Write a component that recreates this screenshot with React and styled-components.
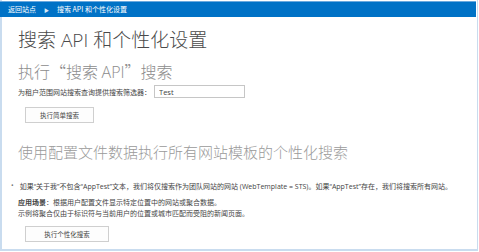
import styled, { createGlobalStyle } from "styled-components";

const GlobalStyle = createGlobalStyle`
  html, body {
    margin: 0;
    padding: 0;
    background: #ffffff;
  }
  body {
    font-family: "Noto Sans CJK SC", "Open Sans", sans-serif;
    color: #444444;
  }
`;

const Frame = styled.div`
  box-sizing: border-box;
  width: 478px;
  height: 251px;
  border: 1px solid #c9dcef;
  border-left-width: 2px;
  border-bottom-width: 2px;
  border-top: none;
  display: flex;
  flex-direction: column;
`;

const TopBar = styled.div`
  display: flex;
  align-items: center;
  gap: 8px;
  height: 15px;
  margin: 1px 1px 0 -2px;
  padding-left: 8px;
  background: #0072c6;
  border-top: 1px solid #6aa9de;
  color: #ffffff;
  font-size: 7px;
  line-height: 1;
`;

const Crumb = styled.span`
  white-space: nowrap;
`;

const Separator = styled.span`
  font-size: 5px;
  opacity: 0.85;
`;

const Content = styled.div`
  display: flex;
  flex-direction: column;
  align-items: flex-start;
  padding-left: 16px;
`;

const PageTitle = styled.h1`
  margin: 11px 0 0;
  font-family: "Open Sans", "Noto Sans CJK SC", sans-serif;
  font-size: 19px;
  font-weight: 300;
  line-height: 24px;
  color: #4a4a4a;
  white-space: nowrap;
`;

const SectionTitle = styled.h2`
  margin: ${({ $top }) => $top}px 0 0;
  font-size: ${({ $size }) => $size}px;
  font-weight: 300;
  line-height: 20px;
  color: ${({ $color }) => $color};
  white-space: nowrap;
`;

const Latin = styled.span`
  font-family: "Open Sans", sans-serif;
`;

const FieldRow = styled.div`
  display: flex;
  align-items: center;
  gap: 3px;
  margin-top: 3px;
  font-size: 7px;
`;

const TextInput = styled.input`
  box-sizing: border-box;
  width: 91px;
  height: 13px;
  padding: 0 4px;
  border: 1px solid #c6c6c6;
  font-family: "Open Sans", sans-serif;
  font-size: 7.5px;
  color: #444444;
  outline: none;
`;

const ActionButton = styled.button`
  box-sizing: border-box;
  width: ${({ $width }) => $width}px;
  height: 16px;
  margin: ${({ $top }) => $top}px 0 0 7px;
  padding: 0;
  border: 1px solid #cfcfcf;
  background: #fdfdfd;
  font-family: "Noto Sans CJK SC", sans-serif;
  font-size: 6.5px;
  color: #444444;
`;

const BulletList = styled.ul`
  margin: 19px 0 0 -7px;
  padding: 0;
  list-style: none;
  font-family: "Open Sans", "Noto Sans CJK SC", sans-serif;
  font-size: 7px;
  white-space: nowrap;
`;

const BulletItem = styled.li`
  display: flex;
  gap: 6px;
  &::before {
    content: "•";
    color: #777777;
  }
`;

const Note = styled.p`
  margin: 6px 0 0;
  font-size: 7px;
  line-height: 11px;
`;

const Strong = styled.b`
  font-weight: 700;
`;

export default function App() {
  return (
    <>
      <GlobalStyle />
      <Frame>
        <TopBar>
          <Crumb>返回站点</Crumb>
          <Separator>▶</Separator>
          <Crumb>搜索 API 和个性化设置</Crumb>
        </TopBar>
        <Content>
          <PageTitle>搜索 API 和个性化设置</PageTitle>
          <SectionTitle $top={9} $size={16} $color="#8c8c8c">
            执行“搜索 <Latin>API</Latin>”搜索
          </SectionTitle>
          <FieldRow>
            <span>为租户范围网站搜索查询提供搜索筛选器：</span>
            <TextInput defaultValue="Test" />
          </FieldRow>
          <ActionButton $top={9} $width={69}>执行简单搜索</ActionButton>
          <SectionTitle $top={19} $size={15} $color="#9a9a9a">
            使用配置文件数据执行所有网站模板的个性化搜索
          </SectionTitle>
          <BulletList>
            <BulletItem>
              如果“关于我”不包含“AppTest”文本，我们将仅搜索作为团队网站的网站 (WebTemplate = STS)。如果“AppTest”存在，我们将搜索所有网站。
            </BulletItem>
          </BulletList>
          <Note>
            <Strong>应用场景</Strong>：根据用户配置文件显示特定位置中的网站或聚合数据。
            <br />
            示例将聚合仅由于标识符与当前用户的位置或城市匹配而受阻的新闻页面。
          </Note>
          <ActionButton $top={7} $width={84}>执行个性化搜索</ActionButton>
        </Content>
      </Frame>
    </>
  );
}
